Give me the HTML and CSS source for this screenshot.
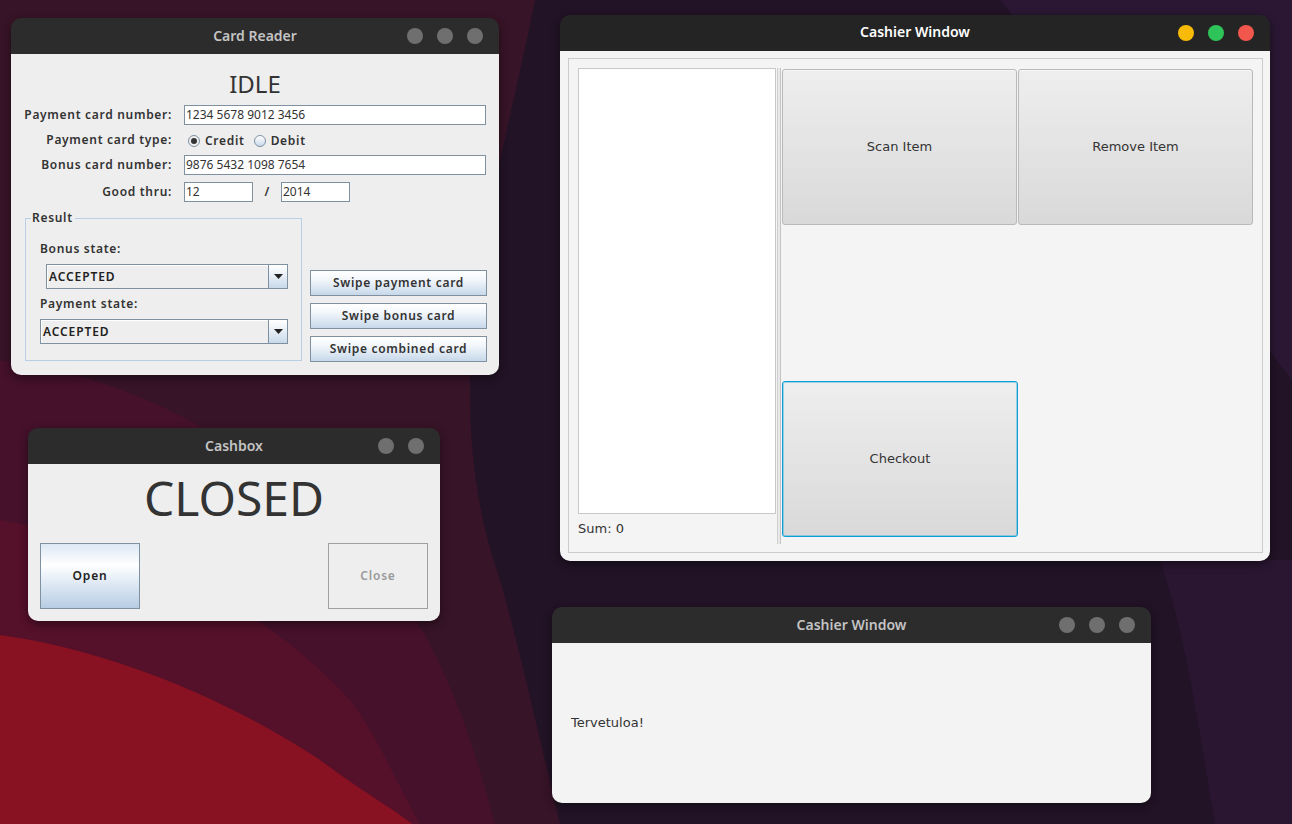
FILE: index.html
```html
<!DOCTYPE html>
<html lang="fi">
<head>
<meta charset="utf-8">
<title>Desktop</title>
<link rel="stylesheet" href="styles.css">
</head>
<body>
<div class="desktop">
  <svg class="wallpaper" viewBox="0 0 1292 824" width="1292" height="824" aria-hidden="true">
    <rect width="1292" height="824" fill="#221326"/>
    <path d="M1000 0 C1100 120 1200 260 1292 380 L1292 0 Z" fill="#2b1733"/>
    <path d="M0 0 L535 0 C500 180 430 380 500 580 C520 650 540 740 560 824 L0 824 Z" fill="#371427"/>
    <path d="M0 360 C160 380 300 470 410 610 C460 690 480 770 495 824 L0 824 Z" fill="#45112b"/>
    <path d="M0 520 C120 540 260 600 350 700 C380 740 400 790 420 824 L0 824 Z" fill="#55102a"/>
    <path d="M0 635 C110 650 230 700 320 760 C360 790 395 810 412 824 L0 824 Z" fill="#891222"/>
    <path d="M1160 560 C1190 650 1200 740 1215 824 L1292 824 L1292 560 Z" fill="#2a1631"/>
  </svg>

  <!-- Card Reader -->
  <section class="win card-reader">
    <header class="titlebar"><span class="title">Card Reader</span><div class="controls"><i></i><i></i><i></i></div></header>
    <div class="cr-body">
      <div class="status">IDLE</div>
      <div class="form">
        <label class="lbl">Payment card number:</label>
        <div class="field">1234 5678 9012 3456</div>
        <label class="lbl">Payment card type:</label>
        <div class="radios"><span class="radio on"></span><span class="radio-text">Credit</span><span class="radio second"></span><span class="radio-text">Debit</span></div>
        <label class="lbl">Bonus card number:</label>
        <div class="field">9876 5432 1098 7654</div>
        <label class="lbl last">Good thru:</label>
        <div class="expiry last"><div class="field short">12</div><span class="slash">/</span><div class="field short">2014</div></div>
      </div>
      <div class="lower">
        <fieldset class="result">
          <legend>Result</legend>
          <div class="sub-label">Bonus state:</div>
          <div class="combo indent"><span class="combo-val">ACCEPTED</span><span class="combo-btn"><svg width="9" height="5" viewBox="0 0 9 5"><path d="M0 0 H9 L4.5 5 Z" fill="#222"/></svg></span></div>
          <div class="sub-label">Payment state:</div>
          <div class="combo"><span class="combo-val">ACCEPTED</span><span class="combo-btn"><svg width="9" height="5" viewBox="0 0 9 5"><path d="M0 0 H9 L4.5 5 Z" fill="#222"/></svg></span></div>
        </fieldset>
        <div class="swipes">
          <button class="mbtn">Swipe payment card</button>
          <button class="mbtn">Swipe bonus card</button>
          <button class="mbtn">Swipe combined card</button>
        </div>
      </div>
    </div>
  </section>

  <!-- Cashbox -->
  <section class="win cashbox">
    <header class="titlebar"><span class="title">Cashbox</span><div class="controls"><i></i><i></i></div></header>
    <div class="cb-body">
      <div class="big">CLOSED</div>
      <div class="cb-buttons">
        <button class="cbtn open">Open</button>
        <button class="cbtn closebtn">Close</button>
      </div>
    </div>
  </section>

  <!-- Cashier Window (focused) -->
  <section class="win cashier">
    <header class="titlebar dark"><span class="title white">Cashier Window</span><div class="controls"><i class="yellow"></i><i class="green"></i><i class="red"></i></div></header>
    <div class="fx-body">
      <div class="fx-box">
        <div class="left-col">
          <div class="list"></div>
          <div class="sum">Sum: 0</div>
        </div>
        <div class="divider"></div>
        <div class="btn-grid">
          <button class="fxbtn">Scan Item</button>
          <button class="fxbtn">Remove Item</button>
          <button class="fxbtn focus checkout">Checkout</button>
        </div>
      </div>
    </div>
  </section>

  <!-- Cashier Window (customer display) -->
  <section class="win cashier2">
    <header class="titlebar"><span class="title">Cashier Window</span><div class="controls"><i></i><i></i><i></i></div></header>
    <div class="fx-body2">
      <span class="welcome">Tervetuloa!</span>
    </div>
  </section>
</div>
</body>
</html>
```

FILE: styles.css
```css
* { box-sizing: border-box; }
html, body { margin: 0; padding: 0; }
body {
  width: 1292px;
  height: 824px;
  overflow: hidden;
  background: #221326;
  font-family: "Noto Sans", "DejaVu Sans", sans-serif;
}
.desktop { position: relative; width: 1292px; height: 824px; overflow: hidden; }
.wallpaper { position: absolute; left: 0; top: 0; display: block; }

/* ---------- windows ---------- */
.win {
  position: absolute;
  display: flex;
  flex-direction: column;
  border-radius: 10px;
  overflow: hidden;
  box-shadow: 0 3px 10px rgba(0, 0, 0, 0.45);
}
.titlebar {
  height: 36px;
  flex: none;
  display: grid;
  grid-template-columns: 1fr auto 1fr;
  align-items: center;
  background: #2c2c2c;
}
.titlebar.dark { background: #242424; }
.title {
  grid-column: 2;
  font: 600 14px/20px "Noto Sans", sans-serif;
  color: #c3c3c3;
  white-space: nowrap;
}
.title.white { color: #ffffff; margin-top: -2px; }
.controls {
  grid-column: 3;
  justify-self: end;
  display: flex;
  gap: 14px;
  padding-right: 16px;
}
.controls i {
  display: block;
  width: 16px;
  height: 16px;
  border-radius: 50%;
  background: #6f6f6f;
}
.controls i.yellow { background: #f7bb07; }
.controls i.green { background: #2fc45a; }
.controls i.red { background: #f2574e; }

/* ---------- Card Reader (Swing Metal) ---------- */
.card-reader { left: 11px; top: 18px; width: 488px; height: 357px; }
.cr-body {
  flex: 1;
  background: #eeeeee;
  padding-top: 16px;
  color: #333333;
}
.status {
  text-align: center;
  font: 400 24px/28px "Noto Sans", sans-serif;
  color: #333;
}
.form {
  margin-top: 7px;
  display: grid;
  grid-template-columns: 161px 1fr;
  grid-auto-rows: 20px;
  column-gap: 12px;
  row-gap: 5px;
  padding-right: 13px;
}
.lbl {
  justify-self: end;
  align-self: center;
  font: 600 12px/16px "Noto Sans", sans-serif;
  letter-spacing: 0.7px;
  color: #333;
  white-space: nowrap;
}
.last { margin-top: 4px; }
.field {
  height: 20px;
  background: #ffffff;
  border: 1px solid #7f90a1;
  font: 400 12px/18px "Noto Sans", sans-serif;
  color: #333;
  padding-left: 1px;
  white-space: nowrap;
}
.field.short { width: 69px; }
.expiry { display: flex; align-items: center; }
.slash {
  width: 28px;
  text-align: center;
  font: 600 12px/16px "Noto Sans", sans-serif;
  color: #333;
}
.radios {
  display: flex;
  align-items: center;
  margin-top: 1px;
  font: 600 12px/16px "Noto Sans", sans-serif;
  letter-spacing: 0.7px;
  color: #333;
}
.radio {
  width: 12px;
  height: 12px;
  border-radius: 50%;
  border: 1px solid #7f90a1;
  background: linear-gradient(#ffffff, #c9d9ea);
  margin: 0 5px 0 4px;
  position: relative;
  flex: none;
}
.radio.second { margin-left: 9px; }
.radio.on { background: #eeeeee; }
.radio.on::after {
  content: "";
  position: absolute;
  left: 2px;
  top: 2px;
  width: 6px;
  height: 6px;
  border-radius: 50%;
  background: #333;
}

.lower {
  margin-top: 10px;
  display: flex;
  align-items: flex-end;
  gap: 8px;
  padding: 0 12px 0 14px;
}
.result {
  margin: 0 0 1px 0;
  width: 277px;
  border: 1px solid #b8cfe5;
  padding: 15px 13px 16px 14px;
  min-inline-size: 0;
}
.result legend {
  margin-left: -9px;
  padding: 0 2px 0 1px;
  font: 600 12px/16px "Noto Sans", sans-serif;
  letter-spacing: 0.7px;
  color: #333;
}
.sub-label {
  font: 600 12px/16px "Noto Sans", sans-serif;
  letter-spacing: 0.7px;
  color: #333;
  margin-bottom: 7px;
}
.combo {
  height: 25px;
  display: flex;
  border: 1px solid #7f90a1;
  background: #eeeeee;
  margin-bottom: 7px;
}
.combo:last-child { margin-bottom: 0; }
.combo.indent { margin-left: 6px; }
.combo-val {
  flex: 1;
  border-top: 1px solid #ffffff;
  border-left: 1px solid #ffffff;
  padding-left: 1px;
  font: 600 12px/22px "Noto Sans", sans-serif;
  letter-spacing: 0.9px;
  color: #222;
}
.combo-btn {
  width: 19px;
  flex: none;
  border-left: 1px solid #7f90a1;
  background: linear-gradient(#ffffff 0%, #f1f5fa 30%, #c8d9ea 100%);
  display: flex;
  align-items: center;
  justify-content: center;
}
.swipes {
  display: flex;
  flex-direction: column;
  gap: 7px;
  width: 177px;
}
.mbtn {
  height: 26px;
  margin: 0;
  padding: 0;
  border: 1px solid #7f90a1;
  border-radius: 0;
  background: linear-gradient(#ffffff 0%, #f3f7fb 35%, #c7d8ea 100%);
  font: 600 12px/16px "Noto Sans", sans-serif;
  letter-spacing: 0.7px;
  color: #333;
}

/* ---------- Cashbox ---------- */
.cashbox { left: 28px; top: 428px; width: 412px; height: 193px; }
.cb-body {
  flex: 1;
  background: #eeeeee;
  padding: 7px 12px 12px 12px;
  display: flex;
  flex-direction: column;
}
.big {
  text-align: center;
  font: 400 48px/54px "Noto Sans", sans-serif;
  color: #333;
}
.cb-buttons {
  margin-top: 18px;
  display: flex;
  justify-content: space-between;
}
.cbtn {
  width: 100px;
  height: 66px;
  margin: 0;
  padding: 0;
  border-radius: 0;
  font: 600 12px/16px "Noto Sans", sans-serif;
  letter-spacing: 0.8px;
}
.cbtn.open {
  border: 1px solid #7f90a1;
  background: linear-gradient(#dce8f4 0%, #ffffff 33%, #e6eef7 55%, #b7cde3 100%);
  color: #222;
}
.cbtn.closebtn {
  border: 1px solid #a0a0a0;
  background: #eeeeee;
  color: #9a9a9a;
}

/* ---------- Cashier window (JavaFX) ---------- */
.cashier { left: 560px; top: 15px; width: 710px; height: 546px; }
.fx-body {
  flex: 1;
  background: #f4f4f4;
  padding: 7px 7px 8px 8px;
  display: flex;
}
.fx-box {
  flex: 1;
  border: 1px solid #cccccc;
  padding: 9px 9px 8px 9px;
  display: flex;
}
.left-col {
  width: 198px;
  display: flex;
  flex-direction: column;
}
.list {
  flex: 1;
  background: #ffffff;
  border: 1px solid #c8c8c8;
}
.sum {
  height: 30px;
  font: 400 13px/30px "DejaVu Sans", sans-serif;
  color: #333;
}
.divider {
  width: 4px;
  margin-left: 1px;
  border-left: 1px solid #cfcfcf;
  border-right: 1px solid #c4c4c4;
  background: #e9e9e9;
}
.btn-grid {
  margin-left: 1px;
  margin-top: 1px;
  display: grid;
  grid-template-columns: 235px 235px;
  grid-template-rows: 156px 156px 156px;
  column-gap: 1px;
}
.fxbtn {
  margin: 0;
  padding: 0;
  border: 1px solid #b9b9b9;
  border-radius: 3px;
  background: linear-gradient(#eeeeee, #d9d9d9);
  box-shadow: inset 0 1px 0 #f7f7f7;
  font: 400 13px/16px "DejaVu Sans", sans-serif;
  color: #333;
}
.fxbtn.checkout {
  grid-column: 1;
  grid-row: 3;
  width: 236px;
}
.fxbtn.focus {
  border: 1px solid #0a9fd6;
  box-shadow: inset 0 0 0 1px rgba(10, 159, 214, 0.35);
}

/* ---------- Customer display ---------- */
.cashier2 { left: 552px; top: 607px; width: 599px; height: 196px; }
.fx-body2 {
  flex: 1;
  background: #f3f3f3;
  display: flex;
  align-items: center;
  padding-left: 19px;
}
.welcome {
  font: 400 13px/16px "DejaVu Sans", sans-serif;
  color: #333;
}
```
